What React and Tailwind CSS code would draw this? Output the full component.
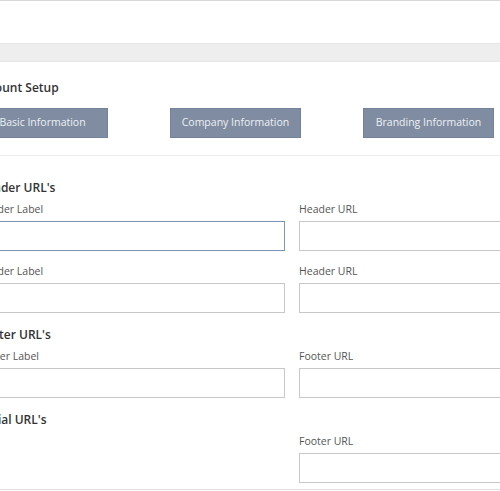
import React from "react";

const tabs = ["Basic Information", "Company Information", "Branding Information"];

const rows = [
  { heading: "Header URL's", left: "Header Label", right: "Header URL", focused: true, first: true },
  { left: "Header Label", right: "Header URL" },
  { heading: "Footer URL's", left: "Footer Label", right: "Footer URL" },
  { heading: "Social URL's", left: null, right: "Footer URL" },
];

const Field = ({ label, focused }) => (
  <div className="flex flex-col">
    <label className="text-[10.5px] leading-[13px] text-[#555] mb-[5px] h-[13px]">{label}</label>
    {label !== null && (
      <input
        className={
          "h-[30px] w-full bg-white border outline-none " +
          (focused ? "border-[#7f93b8]" : "border-[#c8c8c8]")
        }
      />
    )}
  </div>
);

const App = () => {
  return (
    <div
      className="w-[500px] h-[491px] overflow-hidden bg-white"
      style={{ fontFamily: "'Open Sans', 'Liberation Sans', sans-serif" }}
    >
      <div className="border-t border-[#d8d8d8] h-[43px]" />
      <div className="h-[19px] bg-[#eeeeee] border-y border-[#e6e6e6]" />

      <div className="-ml-[25px] w-[640px]">
        <h2 className="mt-[18px] text-[12px] leading-[16px] font-semibold text-[#333]">Account Setup</h2>
        <div className="flex gap-[62px] mt-[12px] ml-[2px]">
          {tabs.map((t) => (
            <button
              key={t}
              className="w-[131px] h-[30px] bg-[#7f8ca1] border border-[#75839a] text-[#eef1f5] text-[10.5px]"
            >
              {t}
            </button>
          ))}
        </div>
      </div>

      <div className="mt-[17px] border-t border-[#ececec]" />

      <div className="-ml-[22px] w-[640px]">
        {rows.map((r, i) => (
          <div key={i}>
            {r.heading && (
              <h3
                className={
                  "text-[12px] leading-[16px] font-semibold text-[#333] mb-[7px] " +
                  (r.first ? "mt-[24px]" : "mt-[14px]")
                }
              >
                {r.heading}
              </h3>
            )}
            <div className={"grid grid-cols-[307px_307px] gap-x-[14px] " + (r.heading ? "" : "mt-[14px]")}>
              <Field label={r.left} focused={r.focused} />
              <Field label={r.right} />
            </div>
          </div>
        ))}
      </div>
      <div className="mt-[6px] border-t border-[#e0e0e0]" />
    </div>
  );
};

export default App;
